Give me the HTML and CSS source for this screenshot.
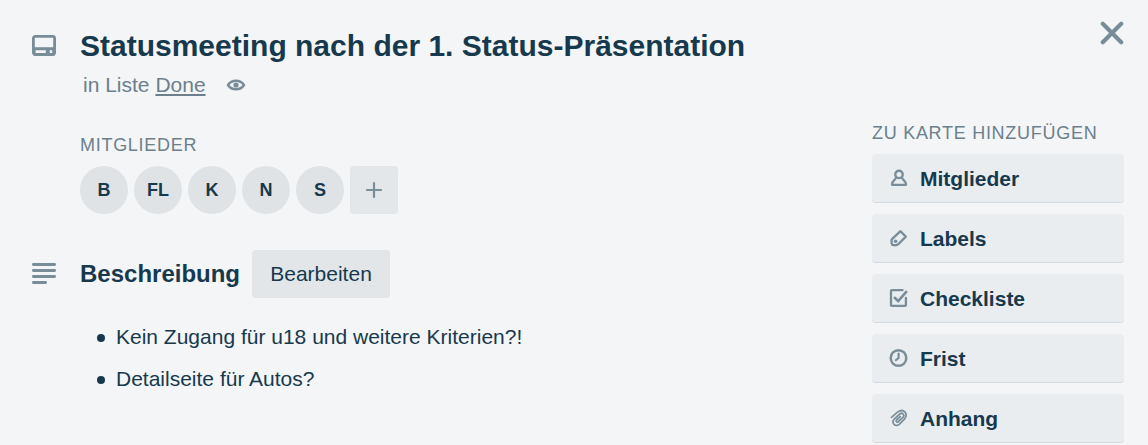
FILE: index.html
```html
<!DOCTYPE html>
<html lang="de">
<head>
<meta charset="utf-8">
<title>Statusmeeting nach der 1. Status-Präsentation</title>
<link rel="stylesheet" href="styles.css">
</head>
<body>
<div class="card">
  <main class="main">
    <header class="header">
      <svg class="icon card-icon" viewBox="0 0 26 24"><rect x="2.4" y="2.4" width="21.2" height="18.2" rx="2" fill="none" stroke="currentColor" stroke-width="2.8"/><path d="M2 13.2H24V21.3H2Z" fill="currentColor"/><path class="slot" d="M4.6 17.6H14.8M18.8 17.6H21.2"/></svg>
      <div>
        <h1 class="title">Statusmeeting nach der 1. Status-Präsentation</h1>
        <p class="list-line">in Liste <a class="list-link">Done</a>
          <svg class="icon eye" viewBox="0 0 20 14"><path d="M2 7C5.7 1.2 14.3 1.2 18 7C14.3 12.8 5.7 12.8 2 7Z" fill="none" stroke="currentColor" stroke-width="2.5" stroke-linejoin="round"/><circle cx="10" cy="7" r="2.6" fill="currentColor"/></svg>
        </p>
      </div>
    </header>
    <section class="members">
      <h2 class="label">MITGLIEDER</h2>
      <div class="member-row">
        <span class="avatar">B</span><span class="avatar">FL</span><span class="avatar">K</span><span class="avatar">N</span><span class="avatar">S</span>
        <button class="add"><svg class="icon plus" viewBox="0 0 18 18"><path d="M9 2V16M2 9H16" stroke="currentColor" stroke-width="2.2" stroke-linecap="round"/></svg></button>
      </div>
    </section>
    <section class="description">
      <div class="description-head">
        <svg class="icon lines" viewBox="0 0 26 24"><path d="M2.4 2.5H23.6M2.4 8.5H23.6M2.4 14.5H23.6M2.4 20.5H14.6" stroke="currentColor" stroke-width="2.9" stroke-linecap="round"/></svg>
        <h2 class="subtitle">Beschreibung</h2>
        <button class="edit">Bearbeiten</button>
      </div>
      <ul class="bullets">
        <li>Kein Zugang für u18 und weitere Kriterien?!</li>
        <li>Detailseite für Autos?</li>
      </ul>
    </section>
  </main>
  <aside class="sidebar">
    <svg class="icon close" viewBox="0 0 24 24"><path d="M2.8 2.8L21.2 21.2M21.2 2.8L2.8 21.2" stroke="currentColor" stroke-width="4.2" stroke-linecap="round"/></svg>
    <h2 class="label">ZU KARTE HINZUFÜGEN</h2>
    <nav class="actions">
      <button class="action"><svg class="icon" viewBox="0 0 20 20"><circle cx="10" cy="6.4" r="3.7" fill="none" stroke="currentColor" stroke-width="2.4"/><path d="M7.2 9.2C7.4 11.5 3 12 3 16.8H17C17 12 12.6 11.5 12.8 9.2" fill="none" stroke="currentColor" stroke-width="2.3" stroke-linejoin="round"/></svg><span>Mitglieder</span></button>
      <button class="action"><svg class="icon" viewBox="0 0 20 20"><path d="M3.5 10.6L11.5 3.2L16.8 8.6L9.3 16.2Q7.9 17.4 6 17.2L4.2 17Q2.8 16.8 2.7 15.3L2.5 13Q2.4 11.7 3.5 10.6Z" fill="none" stroke="currentColor" stroke-width="2.3" stroke-linejoin="round"/><circle cx="6.6" cy="13.2" r="1.8" fill="currentColor"/></svg><span>Labels</span></button>
      <button class="action"><svg class="icon" viewBox="0 0 20 20"><path d="M13.6 2.1H2.9Q2 2.1 2 3V17Q2 17.9 2.9 17.9H16Q16.9 17.9 16.9 17V10" fill="none" stroke="currentColor" stroke-width="2.3" stroke-linecap="round"/><path d="M5.8 9.8L9.2 13.1L17.2 3.9" fill="none" stroke="currentColor" stroke-width="2.6" stroke-linecap="round"/></svg><span>Checkliste</span></button>
      <button class="action"><svg class="icon" viewBox="0 0 20 20"><circle cx="9.5" cy="10" r="7.8" fill="none" stroke="currentColor" stroke-width="2.5"/><path d="M9.6 5.6V10L6.9 12.2" fill="none" stroke="currentColor" stroke-width="2.2" stroke-linecap="round" stroke-linejoin="round"/></svg><span>Frist</span></button>
      <button class="action"><svg class="icon" viewBox="0 0 20 20"><path d="M2.5 9.3L8.5 4.1Q13.3 .9 16 4.1Q18.6 7.6 15.4 11.1L10.2 16.3Q7.4 18.6 5 16.3Q2.7 13.7 5.2 11.1L10.8 6Q12.7 4.5 14.2 6Q15.6 7.6 14 9.3L9.3 13.7Q8.2 14.5 7.4 13.7Q6.8 12.9 7.6 12L11.3 8.6" fill="none" stroke="currentColor" stroke-width="1.7" stroke-linecap="round" stroke-linejoin="round"/></svg><span>Anhang</span></button>
    </nav>
  </aside>
</div>
</body>
</html>
```
FILE: styles.css
```css
* { box-sizing: border-box; }
body {
  margin: 0;
  overflow: hidden;
  background: #f4f5f7;
  color: #17394d;
  font: 21px/30px "Liberation Sans", Arial, sans-serif;
}
h1, h2, p, ul { margin: 0; padding: 0; }
button { font: inherit; color: inherit; border: 0; padding: 0; border-radius: 4px; }
.icon { display: block; flex: none; color: #798d99; }
.card { display: flex; height: 445px; justify-content: space-between; padding: 0 24px 0 31px; }
.main { width: 780px; padding-top: 28px; }
.header { display: flex; gap: 23px; }
.card-icon { width: 26px; height: 24px; margin-top: 6px; }
.slot { stroke: #f4f5f7; stroke-width: 2.6; fill: none; }
.title { font-size: 30px; line-height: 36px; white-space: nowrap; }
.list-line { display: flex; align-items: center; margin: 6px 0 0 3px; color: #6b808c; white-space: pre; }
.list-link { text-decoration: underline; text-decoration-thickness: 2px; text-underline-offset: 2px; }
.eye { width: 20px; height: 14px; margin: -1px 0 0 20px; }
.members { margin: 30px 0 0 49px; }
.label { font-size: 18px; font-weight: 400; letter-spacing: .72px; color: #6b808c; white-space: nowrap; }
.member-row { display: flex; gap: 6px; margin-top: 6px; }
.avatar {
  width: 48px;
  height: 48px;
  border-radius: 50%;
  background: #dfe3e6;
  font-size: 18px;
  font-weight: 700;
  line-height: 48px;
  text-align: center;
}
.add { display: grid; place-items: center; width: 48px; height: 48px; background: #e3e7ea; }
.plus { width: 18px; height: 18px; }
.description { margin-top: 36px; }
.description-head { display: flex; align-items: center; height: 48px; }
.lines { width: 26px; height: 24px; margin-right: 23px; }
.subtitle { font-size: 24px; margin-right: 12px; }
.edit { width: 138px; height: 48px; background: #e2e6e9; }
.bullets { display: grid; gap: 12px; margin-top: 24px; padding-left: 66px; list-style: none; }
.bullets li { display: flex; align-items: center; gap: 11px; }
.bullets li::before { content: ""; width: 8px; height: 8px; margin-top: 1px; border-radius: 50%; background: #17394d; }
.sidebar { display: flex; flex-direction: column; width: 252px; padding-top: 21px; }
.close { width: 24px; height: 24px; align-self: flex-end; margin-bottom: 73px; }
.actions { display: grid; gap: 11px; margin-top: 6px; }
.action {
  display: flex;
  align-items: center;
  gap: 11px;
  height: 49px;
  padding-left: 17px;
  background: #eaedf0;
  border-bottom: 1px solid #d2d9df;
  font-weight: 700;
}
.action .icon { width: 20px; height: 20px; }
.action span { padding-top: 2px; }
```
